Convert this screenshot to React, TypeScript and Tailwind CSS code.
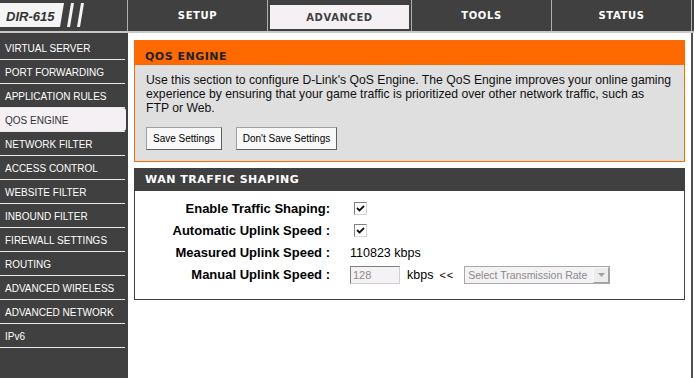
import React from "react";

const menuItems = [
  "VIRTUAL SERVER",
  "PORT FORWARDING",
  "APPLICATION RULES",
  "QOS ENGINE",
  "NETWORK FILTER",
  "ACCESS CONTROL",
  "WEBSITE FILTER",
  "INBOUND FILTER",
  "FIREWALL SETTINGS",
  "ROUTING",
  "ADVANCED WIRELESS",
  "ADVANCED NETWORK",
  "IPv6",
];

const tabs = ["SETUP", "ADVANCED", "TOOLS", "STATUS"];

const sans = { fontFamily: '"Liberation Sans", Arial, sans-serif' };
const heading = { fontFamily: '"DejaVu Sans", Verdana, sans-serif' };

function Checkbox() {
  return (
    <span className="inline-flex w-[13px] h-[13px] items-center justify-center bg-white border border-t-[#808080] border-l-[#808080] border-b-[#d8d8d8] border-r-[#d8d8d8]">
      <svg width="9" height="9" viewBox="0 0 9 9">
        <path d="M1 4 L3.5 6.5 L8 2" stroke="#111" strokeWidth="1.8" fill="none" />
      </svg>
    </span>
  );
}

function Logo() {
  return (
    <div className="w-[127px] h-full relative">
      <svg width="127" height="31" viewBox="0 0 127 31" className="absolute inset-0">
        <polygon points="0,3 64,3 60,27 0,27" fill="#f4f4f4" />
        <polygon points="71,3 74,3 70,27 67,27" fill="#f4f4f4" />
        <polygon points="81,3 84,3 80,27 77,27" fill="#f4f4f4" />
      </svg>
      <span
        className="absolute left-[6px] top-[7px] text-[13px] font-bold italic text-[#333]"
        style={sans}
      >
        DIR-615
      </span>
    </div>
  );
}

function Row({ label, children }: { label: string; children: React.ReactNode }) {
  return (
    <div className="flex items-center h-[22px]">
      <div className="w-[195px] text-right text-[13px] font-bold text-black" style={sans}>
        {label}
      </div>
      <div className="ml-[20px] flex items-center text-[12.5px] text-black" style={sans}>
        {children}
      </div>
    </div>
  );
}

export default function App() {
  return (
    <div className="w-[694px] h-[378px] bg-white overflow-hidden flex flex-col">
      {/* Top bar */}
      <div className="h-[33px] bg-[#404040] flex border-b-2 border-[#c8c8c8] shrink-0">
        <Logo />
        <div className="flex flex-1 border-l border-[#b0b0b0] mr-[2px] border-r border-r-[#b0b0b0]">
          {tabs.map((t, i) => (
            <div
              key={t}
              className={`flex-1 flex ${i < 3 ? "border-r border-[#b0b0b0]" : ""} ${
                t === "ADVANCED" ? "pt-[5px] pb-[2px] px-[2px]" : ""
              }`}
            >
              <div
                className={`flex-1 flex items-center justify-center text-[10px] font-bold tracking-[0.6px] ${
                  t === "ADVANCED" ? "bg-[#f4f0f4] text-[#404040]" : "text-white"
                }`}
                style={heading}
              >
                {t}
              </div>
            </div>
          ))}
        </div>
      </div>

      <div className="flex flex-1">
        {/* Sidebar */}
        <div className="w-[128px] bg-[#404040] pt-[3px] shrink-0">
          {menuItems.map((m) => (
            <div key={m} className="h-[24px] pr-[2px] flex flex-col">
              <div
                className={`flex-1 flex items-center pl-[5px] pt-[1px] text-[10px] ${
                  m === "QOS ENGINE" ? "bg-[#f4f0f4] text-[#333] rounded-r-[3px]" : "text-white"
                }`}
                style={sans}
              >
                {m}
              </div>
              <div className="h-[1px] bg-[#e8e8e8] mr-[1px]" />
            </div>
          ))}
        </div>

        {/* Main content */}
        <div className="flex-1 border-r-2 border-[#505050] mr-[1px] px-[6px] pt-[7px]">
          <div className="border border-[#ff6a00] bg-[#dfdfdf]">
            <div
              className="h-[24px] bg-[#ff6a00] flex items-end pl-[10px] text-[11px] font-bold tracking-[0.5px] text-[#222]"
              style={heading}
            >
              QOS ENGINE
            </div>
            <div className="px-[11px] pt-[8px] pb-[11px]">
              <p className="text-[12.2px] leading-[14px] text-[#111]" style={sans}>
                Use this section to configure D-Link's QoS Engine. The QoS Engine improves your online gaming
                <br />
                experience by ensuring that your game traffic is prioritized over other network traffic, such as
                <br />
                FTP or Web.
              </p>
              <div className="flex gap-[14px] mt-[12px]">
                <button
                  className="h-[23px] px-[6px] bg-[#f8f8f8] border border-[#a0a0a0] border-b-[#606060] border-r-[#606060] text-[10px] text-black"
                  style={sans}
                >
                  Save Settings
                </button>
                <button
                  className="h-[23px] px-[6px] bg-[#f8f8f8] border border-[#a0a0a0] border-b-[#606060] border-r-[#606060] text-[10px] text-black"
                  style={sans}
                >
                  Don't Save Settings
                </button>
              </div>
            </div>
          </div>

          <div className="mt-[6px] border border-[#404040]">
            <div
              className="h-[22px] bg-[#404040] flex items-center pl-[10px] text-[11px] font-bold tracking-[0.5px] text-white"
              style={heading}
            >
              WAN TRAFFIC SHAPING
            </div>
            <div className="pt-[7px] pb-[13px]">
              <Row label="Enable Traffic Shaping:">
                <span className="ml-[4px]">
                  <Checkbox />
                </span>
              </Row>
              <Row label="Automatic Uplink Speed :">
                <span className="ml-[4px]">
                  <Checkbox />
                </span>
              </Row>
              <Row label="Measured Uplink Speed :">110823 kbps</Row>
              <Row label="Manual Uplink Speed :">
                <div className="w-[50px] h-[18px] bg-[#f4f2f4] border border-[#d0d0d0] border-t-[#808080] border-l-[#808080] text-[11px] text-[#8a8a8a] pl-[2px] leading-[16px]">
                  128
                </div>
                <span className="ml-[7px]">kbps</span>
                <span className="ml-[6px] text-[11px] tracking-[1px]">&lt;&lt;</span>
                <div className="ml-[10px] w-[146px] h-[18px] flex border border-[#a8a8a8] bg-[#f4f2f4]">
                  <span className="flex-1 pl-[3px] text-[10.5px] leading-[16px] text-[#8a8a8a] whitespace-nowrap overflow-hidden">
                    Select Transmission Rate
                  </span>
                  <span className="w-[16px] h-full bg-[#ececec] border border-[#f8f8f8] border-b-[#a0a0a0] border-r-[#a0a0a0] flex items-center justify-center">
                    <svg width="7" height="4" viewBox="0 0 7 4">
                      <polygon points="0,0 7,0 3.5,4" fill="#a0a0a0" />
                    </svg>
                  </span>
                </div>
              </Row>
            </div>
          </div>
        </div>
      </div>
    </div>
  );
}
